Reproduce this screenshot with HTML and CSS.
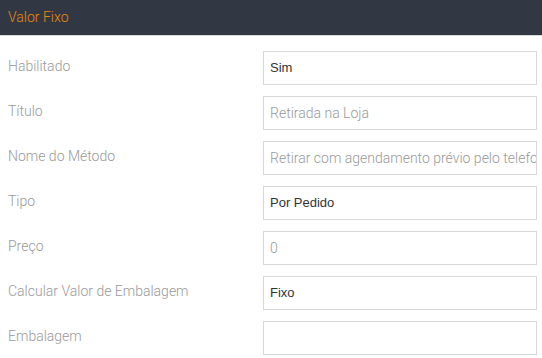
FILE: index.html
```html
<!DOCTYPE html>
<html>
  <head>
    <title>Valor Fixo</title>
    <link rel="stylesheet" href="styles.css">
  </head>
  <body>
    <div class="panel">
      <div class="panel-head">Valor Fixo</div>
      <div class="panel-body">
        <div class="row">
          <label class="label">Habilitado</label>
          <div class="field select">Sim</div>
        </div>
        <div class="row">
          <label class="label">Título</label>
          <div class="field placeholder">Retirada na Loja</div>
        </div>
        <div class="row">
          <label class="label">Nome do Método</label>
          <div class="field placeholder">Retirar com agendamento prévio pelo telefone</div>
        </div>
        <div class="row">
          <label class="label">Tipo</label>
          <div class="field select">Por Pedido</div>
        </div>
        <div class="row">
          <label class="label">Preço</label>
          <div class="field placeholder">0</div>
        </div>
        <div class="row">
          <label class="label">Calcular Valor de Embalagem</label>
          <div class="field select">Fixo</div>
        </div>
        <div class="row">
          <label class="label">Embalagem</label>
          <div class="field"></div>
        </div>
      </div>
    </div>
  </body>
</html>
```
FILE: styles.css
```css
body {
  margin: 0;
  background: #fff;
  font-family: Roboto, "Liberation Sans", sans-serif;
}

.panel-head {
  height: 35px;
  line-height: 35px;
  padding-left: 8px;
  background: #323843;
  border-bottom: 1px solid #d5d7da;
  color: #e8890c;
  font-size: 14px;
  font-weight: 300;
}

.panel-body {
  padding: 15px 5px 0 8px;
  display: flex;
  flex-direction: column;
  gap: 11px;
}

.row {
  display: grid;
  grid-template-columns: 255px 1fr;
  align-items: center;
}

.label {
  color: #999;
  font-size: 14px;
  font-weight: 300;
  margin-top: -4px;
}

.field {
  height: 34px;
  box-sizing: border-box;
  border: 1px solid #d8d8d8;
  padding: 0 6px;
  line-height: 32px;
  white-space: nowrap;
  overflow: hidden;
}

.select {
  font-family: "Liberation Sans", Arial, sans-serif;
  font-size: 13px;
  color: #333;
}

.placeholder {
  color: #999;
  font-size: 14px;
  font-weight: 300;
}
```
